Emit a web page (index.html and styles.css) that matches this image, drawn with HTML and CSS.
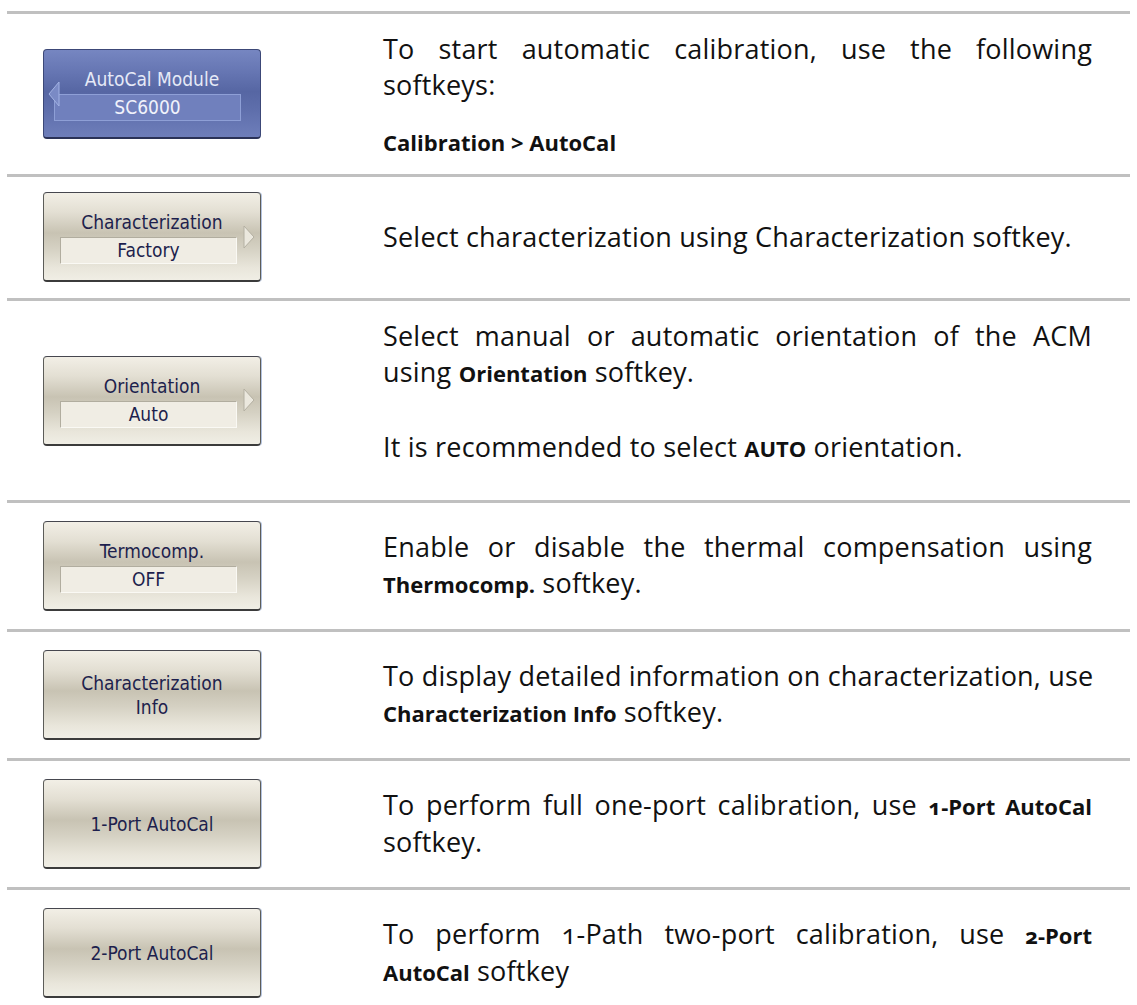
FILE: index.html
```html
<!DOCTYPE html>
<html lang="en">
<head>
    <meta charset="UTF-8">
    <title>AutoCal softkeys</title>
    <link rel="stylesheet" href="styles.css">
</head>
<body>
    <div class="sheet">
        <div class="row row-first">
            <div class="key-cell">
                <div class="softkey softkey-blue">
                    <svg class="arrow arrow-left" width="12" height="26" viewBox="0 0 12 26"><polygon points="11,1 1,13 11,25"/></svg>
                    <div class="sk-title">AutoCal Module</div>
                    <div class="sk-value">SC6000</div>
                </div>
            </div>
            <div class="text-cell">
                <p><span class="jline">To start automatic calibration, use the following</span>softkeys:</p>
                <p class="cmd"><b>Calibration &gt; AutoCal</b></p>
            </div>
        </div>

        <div class="row row-short">
            <div class="key-cell">
                <div class="softkey">
                    <svg class="arrow arrow-right" width="12" height="24" viewBox="0 0 12 24"><polygon points="1,1 11,12 1,23"/></svg>
                    <div class="sk-title">Characterization</div>
                    <div class="sk-value">Factory</div>
                </div>
            </div>
            <div class="text-cell">
                <p>Select characterization using Characterization softkey.</p>
            </div>
        </div>

        <div class="row">
            <div class="key-cell">
                <div class="softkey">
                    <svg class="arrow arrow-right" width="12" height="24" viewBox="0 0 12 24"><polygon points="1,1 11,12 1,23"/></svg>
                    <div class="sk-title">Orientation</div>
                    <div class="sk-value">Auto</div>
                </div>
            </div>
            <div class="text-cell">
                <p><span class="jline">Select manual or automatic orientation of the ACM</span>using <b>Orientation</b> softkey.</p>
                <p class="note">It is recommended to select <b>AUTO</b> orientation.</p>
            </div>
        </div>

        <div class="row">
            <div class="key-cell">
                <div class="softkey">
                    <div class="sk-title">Termocomp.</div>
                    <div class="sk-value">OFF</div>
                </div>
            </div>
            <div class="text-cell">
                <p><span class="jline">Enable or disable the thermal compensation using</span><b>Thermocomp.</b> softkey.</p>
            </div>
        </div>

        <div class="row">
            <div class="key-cell">
                <div class="softkey softkey-plain">
                    <div class="sk-label">Characterization<br>Info</div>
                </div>
            </div>
            <div class="text-cell">
                <p><span class="jline">To display detailed information on characterization, use</span><b>Characterization Info</b> softkey.</p>
            </div>
        </div>

        <div class="row">
            <div class="key-cell">
                <div class="softkey softkey-plain">
                    <div class="sk-label">1-Port AutoCal</div>
                </div>
            </div>
            <div class="text-cell">
                <p><span class="jline">To perform full one-port calibration, use <b>1-Port AutoCal</b></span>softkey.</p>
            </div>
        </div>

        <div class="row">
            <div class="key-cell">
                <div class="softkey softkey-plain">
                    <div class="sk-label">2-Port AutoCal</div>
                </div>
            </div>
            <div class="text-cell">
                <p><span class="jline">To perform 1-Path two-port calibration, use <b>2-Port</b></span><b>AutoCal</b> softkey</p>
            </div>
        </div>
    </div>
</body>
</html>
```

FILE: styles.css
```css
:root {
    --rule-color: #c0c0c0;
    --key-text: #1d1f4d;
    --key-border: #5c5c58;
    --key-edge: #b3c3e0;
}

body {
    margin: 0;
    background: #ffffff;
    color: #111111;
}

.sheet {
    margin: 11px 7px 0;
}

.row {
    display: grid;
    grid-template-columns: 376px 1fr;
    border-top: 3px solid var(--rule-color);
}

.key-cell {
    padding: 18px 0 18px 36px;
    display: flex;
    align-items: center;
}

.row-short .key-cell {
    padding: 15px 0 16px 36px;
}

.text-cell {
    align-self: center;
    padding: 17px 38px 18px 0;
    font-family: "Open Sans", "Noto Sans", sans-serif;
    font-size: 27px;
    line-height: 36px;
    letter-spacing: 0.2px;
    font-variant-numeric: oldstyle-nums;
    text-align: left;
}

.text-cell p {
    margin: 0;
}

.text-cell b {
    font-size: 22px;
    font-weight: 700;
    letter-spacing: 0;
}

/* first line of a wrapped paragraph, justified to both edges */
.jline {
    display: block;
    white-space: nowrap;
    text-align: justify;
    text-align-last: justify;
}

.text-cell .cmd {
    margin-top: 24px;
    line-height: 28px;
}

.text-cell .note {
    margin-top: 38px;
    margin-bottom: 16px;
}

/* softkeys */
.softkey {
    position: relative;
    box-sizing: border-box;
    width: 218px;
    height: 90px;
    display: flex;
    flex-direction: column;
    border: 1px solid var(--key-border);
    border-top-color: #46474f;
    border-bottom: 2px solid #3b3b3b;
    border-radius: 4px;
    box-shadow: 1px 0 0 var(--key-edge);
    background: linear-gradient(to bottom, #f2efe6 0%, #e3dfd3 22%, #c8c3b3 46%, #d5d1c3 64%, #e9e6db 86%, #f0eee5 100%);
    font-family: "DejaVu Sans Condensed", "DejaVu Sans", sans-serif;
    font-stretch: condensed;
    font-size: 19px;
    color: var(--key-text);
}

.sk-title {
    margin-top: 18px;
    line-height: 22px;
    text-align: center;
}

.sk-value {
    box-sizing: border-box;
    height: 27px;
    margin: 4px 23px 0 16px;
    line-height: 25px;
    text-align: center;
    background: #f0ede4;
    border: 1px solid #faf9f4;
    border-top-color: #b1ad9f;
    border-left-color: #b1ad9f;
}

.sk-label {
    margin: auto 0;
    line-height: 24px;
    text-align: center;
}

.softkey-blue {
    border-color: #3c4877;
    border-bottom-color: #2a3257;
    box-shadow: none;
    background: linear-gradient(to bottom, #7686c1 0%, #6676b3 25%, #5666a3 48%, #5f6fac 70%, #6e7eba 100%);
    color: #e6eaf7;
}

.softkey-blue .sk-value {
    margin: 4px 19px 0 10px;
    background: #7080bd;
    border-color: #8e9fd6;
    color: #f0f2fb;
}

.arrow {
    position: absolute;
    top: 50%;
    transform: translateY(-50%);
}

.arrow polygon {
    fill: #ebe8de;
    stroke: #b4b0a2;
    stroke-width: 1;
}

.arrow-right {
    right: 5px;
}

.arrow-left {
    left: 4px;
}

.arrow-left polygon {
    fill: #7a8ac5;
    stroke: #a3b3e4;
}
```
